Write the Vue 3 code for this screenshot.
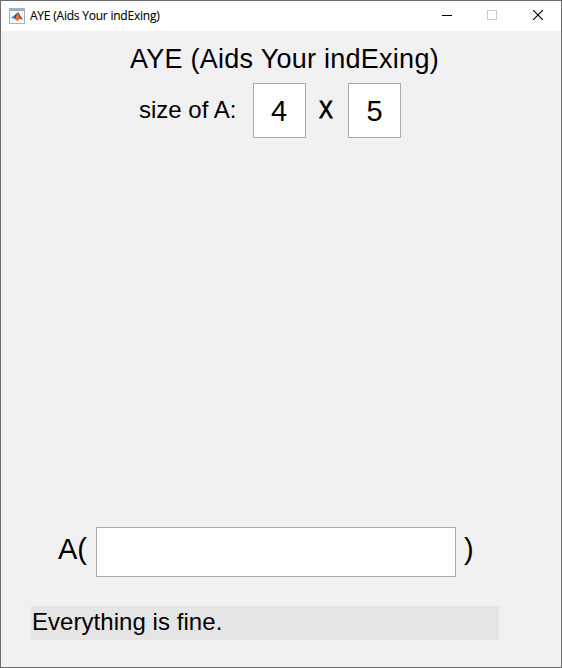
<script setup>
import { ref } from 'vue'

const rows = ref('4')
const cols = ref('5')
const index = ref('')
const status = ref('Everything is fine.')
</script>

<template>
  <main class="window">
    <header class="titlebar">
      <svg class="logo" width="16" height="16" viewBox="0 0 16 16">
        <rect x="0.5" y="0.5" width="15" height="15" fill="#f3f7fa" stroke="#a3b1be" />
        <rect x="1" y="1" width="14" height="2" fill="#8fb4d3" />
        <path d="M2 9.4 5.5 7.6 7.5 8.5 6 11.2 4.6 10.5Z" fill="#3f83b8" />
        <path d="M5.5 7.6 8.8 4 7.5 8.5 6 11.2Z" fill="#354b76" />
        <path d="M8.8 4C10.2 5 11.6 9.2 14 11.7L11.4 10.7 8 13 6 11.2C7.6 9.5 7.8 6.2 8.8 4Z" fill="#e8702a" />
        <path d="M8.8 4C10.2 5 11.6 9.2 14 11.7L11.4 10.7C10 8.7 9.3 6.5 8.8 4Z" fill="#9c2f26" />
      </svg>
      <span class="caption">AYE (Aids Your indExing)</span>
      <div class="controls">
        <svg width="10" height="10" viewBox="0 0 10 10"><path d="M0 5.5H10" stroke="#000" /></svg>
        <svg width="10" height="10" viewBox="0 0 10 10"><rect x="0.5" y="0.5" width="9" height="9" fill="none" stroke="#ccc" /></svg>
        <svg class="dismiss" width="10" height="10" viewBox="0 0 10 10"><path d="M0 0 10 10M10 0 0 10" stroke="#000" stroke-width="1.15" /></svg>
      </div>
    </header>
    <h1 class="title">AYE (Aids Your indExing)</h1>
    <section class="size">
      <label class="size-label">size of A:</label>
      <input v-model="rows" class="field dim rows" />
      <span class="times">X</span>
      <input v-model="cols" class="field dim" />
    </section>
    <section class="expression">
      <span class="open">A(</span>
      <input v-model="index" class="field index" />
      <span class="close">)</span>
    </section>
    <p class="status">{{ status }}</p>
  </main>
</template>

<style>
body { margin: 0; }
</style>

<style scoped>
.window {
  box-sizing: border-box;
  width: 562px;
  height: 668px;
  display: flex;
  flex-direction: column;
  border: 1px solid #6d6d6d;
  background: #f1f1f1;
  color: #000;
  font-family: "Liberation Sans", Arial, sans-serif;
}
.titlebar {
  height: 30px;
  display: flex;
  align-items: center;
  padding: 0 18px 0 8px;
  background: #fff;
  box-sizing: border-box;
  flex: none;
}
.logo { margin: 0 5px 1px 0; }
.caption {
  font: 12px/16px "Open Sans", "Noto Sans", sans-serif;
  letter-spacing: -0.22px;
  white-space: nowrap;
  -webkit-text-stroke: 0.1px #000;
}
.controls { margin: 0 0 2px auto; display: flex; gap: 35px; }
.controls svg { display: block; }
.controls .dismiss { margin-left: 1px; }
.title {
  margin: 10px 0 0 129px;
  font-size: 27px;
  line-height: 36px;
  font-weight: 400;
  letter-spacing: 0.26px;
  white-space: nowrap;
}
.size { display: flex; height: 55px; margin: 6px 0 0 138px; }
.size-label { width: 114px; font-size: 24px; line-height: 54px; white-space: nowrap; }
.field {
  box-sizing: border-box;
  margin: 0;
  padding: 0;
  border: 1px solid #ababab;
  border-radius: 0;
  background: #fff;
  color: #000;
  outline: none;
  font-family: inherit;
}
.dim { width: 53px; height: 55px; font-size: 29px; text-align: center; padding-top: 1px; }
.rows { padding-right: 1px; }
.times {
  width: 42px;
  font-size: 24px;
  line-height: 53px;
  text-align: center;
  transform: translateX(-1px) scaleX(0.86);
  -webkit-text-stroke: 0.9px #000;
}
.expression { display: flex; height: 50px; margin: 389px 0 0 57px; font-size: 29px; line-height: 44px; }
.open { width: 38px; }
.index { width: 360px; height: 50px; font-size: 29px; }
.close { margin-left: 8px; }
.status {
  box-sizing: border-box;
  width: 468px;
  height: 34px;
  margin: 29px 0 0 30px;
  padding-left: 1px;
  background: #e5e5e5;
  font-size: 24px;
  line-height: 31px;
  letter-spacing: 0.05px;
}
</style>
